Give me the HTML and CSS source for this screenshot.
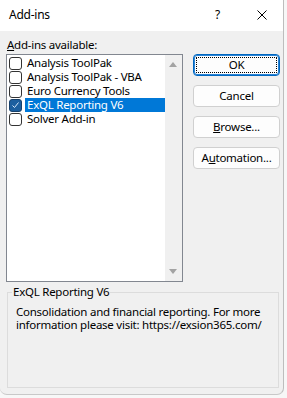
FILE: index.html
```html
<!DOCTYPE html>
<html>
<head>
<meta charset="utf-8">
<link rel="stylesheet" href="styles.css">
</head>
<body>
<div class="dialog">
  <div class="titlebar">
    <span class="title">Add-ins</span>
    <span class="help">?</span>
    <svg class="close" width="10" height="10" viewBox="0 0 10 10"><path d="M0.5 0.5 L9.5 9.5 M9.5 0.5 L0.5 9.5" stroke="#000" stroke-width="1" fill="none"/></svg>
  </div>
  <div class="body">
    <div class="top">
      <div class="left">
        <div class="label"><u>A</u>dd-ins available:</div>
        <div class="listbox">
          <ul class="items">
            <li class="item"><span class="cb"></span><span class="text">Analysis ToolPak</span></li>
            <li class="item"><span class="cb"></span><span class="text">Analysis ToolPak - VBA</span></li>
            <li class="item"><span class="cb"></span><span class="text">Euro Currency Tools</span></li>
            <li class="item selected"><span class="cb checked"><svg width="11" height="11" viewBox="0 0 11 11"><path d="M2.5 5.5 L4.5 7.5 L8.5 2.5" stroke="#d6e8fa" stroke-width="1" fill="none"/></svg></span><span class="text">ExQL Reporting V6</span></li>
            <li class="item"><span class="cb"></span><span class="text">Solver Add-in</span></li>
          </ul>
          <div class="scrollbar">
            <svg width="8" height="5" viewBox="0 0 8 5"><path d="M4 0 L8 5 L0 5 Z" fill="#a3a3a3"/></svg>
            <svg width="8" height="5" viewBox="0 0 8 5"><path d="M0 0 L8 0 L4 5 Z" fill="#a3a3a3"/></svg>
          </div>
        </div>
      </div>
      <div class="buttons">
        <button class="btn default">OK</button>
        <button class="btn">Cancel</button>
        <button class="btn"><u>B</u>rowse...</button>
        <button class="btn">A<u>u</u>tomation...</button>
      </div>
    </div>
    <fieldset class="group">
      <legend>ExQL Reporting V6</legend>
      <p class="desc">Consolidation and financial reporting. For more information please visit: https://exsion365.com/</p>
    </fieldset>
  </div>
</div>
</body>
</html>
```
FILE: styles.css
```css
html, body {
  margin: 0;
  padding: 0;
}
body {
  width: 287px;
  height: 398px;
  background: #f7f7f7;
  font-family: "Noto Sans", "Segoe UI", sans-serif;
  font-size: 11.5px;
  letter-spacing: -0.25px;
  color: #000;
  overflow: hidden;
}
.dialog {
  width: 284px;
  height: 395px;
  background: #f0f0f0;
  border-right: 1px solid #bdbdbd;
  border-bottom: 1px solid #c8c8c8;
  border-radius: 0 0 7px 7px;
  box-sizing: border-box;
  display: flex;
  flex-direction: column;
  overflow: hidden;
}
.titlebar {
  height: 31px;
  background: #fff;
  display: flex;
  align-items: center;
  flex-shrink: 0;
}
.title {
  margin-left: 9px;
  line-height: 14px;
  padding-bottom: 1px;
  font-size: 12px;
}
.help {
  margin-left: auto;
  margin-right: 37px;
  line-height: 14px;
  padding-bottom: 1px;
  font-size: 12px;
}
.close {
  margin-right: 16px;
  margin-bottom: 1px;
}
.body {
  padding: 7px 0 0 6px;
  display: flex;
  flex-direction: column;
}
.top {
  display: flex;
  gap: 10px;
}
.left {
  width: 177px;
  display: flex;
  flex-direction: column;
  gap: 2px;
}
.label {
  line-height: 14px;
  height: 14px;
  padding-left: 1px;
}
.listbox {
  height: 228px;
  border: 1px solid #828790;
  box-sizing: border-box;
  background: #fff;
  display: flex;
}
.items {
  list-style: none;
  margin: 0;
  padding: 1px 0 0 2px;
  flex: 1;
}
.item {
  display: flex;
  align-items: center;
  height: 14px;
}
.cb {
  width: 13px;
  height: 13px;
  box-sizing: border-box;
  border: 1px solid #333;
  border-radius: 3px;
  background: #fff;
  flex-shrink: 0;
  display: flex;
  align-items: center;
  justify-content: center;
}
.cb.checked {
  background: #1c5f9f;
  border-color: #17406a;
}
.text {
  flex: 1;
  height: 14px;
  line-height: 14px;
  margin-left: 3px;
  padding-left: 2px;
  white-space: nowrap;
}
.selected .text {
  background: #0078d7;
  color: #fff;
}
.scrollbar {
  width: 17px;
  background: #f0f0f0;
  display: flex;
  flex-direction: column;
  align-items: center;
  justify-content: space-between;
  padding: 7px 0 7px 0;
  box-sizing: border-box;
}
.scrollbar svg {
  display: block;
  margin-right: 1px;
}
.buttons {
  margin-top: 16px;
  display: flex;
  flex-direction: column;
  gap: 9px;
}
.btn {
  width: 87px;
  height: 22px;
  font-family: "Noto Sans", "Segoe UI", sans-serif;
  font-size: 11.5px;
  letter-spacing: -0.25px;
  color: #000;
  background: #fdfdfd;
  border: 1px solid #d0d0d0;
  border-radius: 4px;
  padding: 0;
  line-height: 14px;
}
.btn.default {
  border: 1px solid #0067c0;
  box-shadow: inset 0 0 0 1px #2a84d6;
  outline: 1px dotted #000;
  outline-offset: -4px;
}
.group {
  margin: 3px 0 0 1px;
  width: 272px;
  box-sizing: border-box;
  border: 1px solid #dcdcdc;
  padding: 0;
}
.group legend {
  margin-left: 4px;
  padding: 0 1px;
  line-height: 14px;
}
.desc {
  margin: 6px 0 0 8px;
  height: 82px;
  line-height: 13px;
}
```
